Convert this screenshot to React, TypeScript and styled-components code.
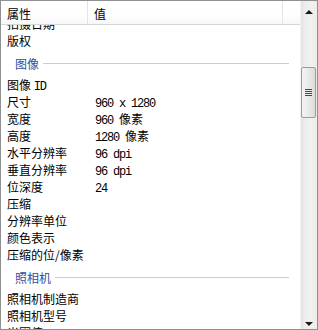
import React from "react";
import styled, { createGlobalStyle } from "styled-components";

const Global = createGlobalStyle`
  html, body { margin: 0; padding: 0; background: #ffffff; overflow: hidden; }
  * { box-sizing: border-box; }
`;

const Frame = styled.div`
  width: 318px;
  height: 330px;
  border: 1px solid #8f9090;
  display: flex;
  background: #ffffff;
  font-family: "Noto Sans CJK SC", "Noto Sans", sans-serif;
  font-size: 12px;
  color: #000000;
`;

const Main = styled.div`
  flex: 1;
  display: flex;
  flex-direction: column;
  min-width: 0;
`;

const Header = styled.div`
  height: 24px;
  flex: none;
  display: flex;
  border-bottom: 1px solid #d5d5d5;
  background: linear-gradient(#ffffff 0%, #ffffff 55%, #f6f7f9 100%);
`;

const HeaderCell = styled.div<{ $w?: number; $pad?: number }>`
  ${(p) => (p.$w ? `width: ${p.$w}px; flex: none;` : "flex: 1;")}
  padding-left: ${(p) => p.$pad ?? 0}px;
  border-right: ${(p) => (p.$w ? "1px solid #e3e5e9" : "none")};
  display: flex;
  align-items: center;
  line-height: 23px;
  padding-top: 2px;
`;

const Viewport = styled.div`
  flex: 1;
  overflow: hidden;
`;

const List = styled.div`
  margin-top: -10px;
  display: flex;
  flex-direction: column;
`;

const Row = styled.div`
  height: 17px;
  display: grid;
  grid-template-columns: 88px 1fr;
  padding-left: 6px;
  line-height: 17px;
  white-space: nowrap;
`;

const Num = styled.span`
  font-family: "Liberation Mono", "DejaVu Sans Mono", monospace;
  font-size: 12px;
  letter-spacing: -1.2px;
`;

const Group = styled.div`
  height: 27px;
  display: flex;
  align-items: center;
  padding-left: 14px;
  padding-right: 11px;
  padding-top: 1px;
  gap: 4px;
  color: #2f4f9f;
`;

const GroupLine = styled.div`
  flex: 1;
  height: 1px;
  background: #c3cddd;
  margin-top: 1px;
`;

const Scrollbar = styled.div`
  width: 17px;
  flex: none;
  display: flex;
  flex-direction: column;
  background: linear-gradient(90deg, #e3e3e3 0%, #ececec 20%, #f1f1f1 60%, #ececec 100%);
  border-left: 1px solid #f4f4f4;
`;

const ArrowButton = styled.div<{ $h: number; $down?: boolean }>`
  height: ${(p) => p.$h}px;
  flex: none;
  display: flex;
  justify-content: center;
  align-items: ${(p) => (p.$down ? "flex-end" : "center")};
  padding-bottom: ${(p) => (p.$down ? 3 : 0)}px;
  padding-top: ${(p) => (p.$down ? 0 : 2)}px;
`;

const Tri = styled.div<{ $down?: boolean }>`
  width: 0;
  height: 0;
  border-left: 4px solid transparent;
  border-right: 4px solid transparent;
  ${(p) =>
    p.$down
      ? "border-top: 4px solid #1a1a1a;"
      : "border-bottom: 4px solid #1a1a1a;"}
`;

const Track = styled.div<{ $h?: number }>`
  ${(p) => (p.$h !== undefined ? `height: ${p.$h}px; flex: none;` : "flex: 1;")}
`;

const Thumb = styled.div`
  height: 51px;
  flex: none;
  margin: 0 1px 0 0;
  border: 1px solid #9b9b9b;
  border-radius: 2px;
  background: linear-gradient(90deg, #f3f3f3 0%, #ececec 40%, #dcdcdc 100%);
  display: flex;
  flex-direction: column;
  align-items: center;
  justify-content: center;
  gap: 1px;
`;

const Grip = styled.div`
  width: 7px;
  height: 1px;
  background: #4a4a4a;
`;

type Item =
  | { kind: "row"; label: React.ReactNode; value?: React.ReactNode }
  | { kind: "group"; title: string };

const items: Item[] = [
  { kind: "row", label: "拍摄日期" },
  { kind: "row", label: "版权" },
  { kind: "group", title: "图像" },
  { kind: "row", label: <>图像 <Num>ID</Num></> },
  { kind: "row", label: "尺寸", value: <Num>960 x 1280</Num> },
  { kind: "row", label: "宽度", value: <><Num>960 </Num>像素</> },
  { kind: "row", label: "高度", value: <><Num>1280 </Num>像素</> },
  { kind: "row", label: "水平分辨率", value: <Num>96 dpi</Num> },
  { kind: "row", label: "垂直分辨率", value: <Num>96 dpi</Num> },
  { kind: "row", label: "位深度", value: <Num>24</Num> },
  { kind: "row", label: "压缩" },
  { kind: "row", label: "分辨率单位" },
  { kind: "row", label: "颜色表示" },
  { kind: "row", label: "压缩的位/像素" },
  { kind: "group", title: "照相机" },
  { kind: "row", label: "照相机制造商" },
  { kind: "row", label: "照相机型号" },
  { kind: "row", label: "光圈值" },
];

export default function App() {
  return (
    <>
      <Global />
      <Frame>
        <Main>
          <Header>
            <HeaderCell $w={87} $pad={6}>属性</HeaderCell>
            <HeaderCell $w={195} $pad={6}>值</HeaderCell>
            <HeaderCell />
          </Header>
          <Viewport>
            <List>
              {items.map((it, i) =>
                it.kind === "group" ? (
                  <Group key={i}>
                    <span>{it.title}</span>
                    <GroupLine />
                  </Group>
                ) : (
                  <Row key={i}>
                    <span>{it.label}</span>
                    <span>{it.value}</span>
                  </Row>
                )
              )}
            </List>
          </Viewport>
        </Main>
        <Scrollbar>
          <ArrowButton $h={20}>
            <Tri />
          </ArrowButton>
          <Track $h={46} />
          <Thumb>
            <Grip />
            <Grip />
            <Grip />
            <Grip />
          </Thumb>
          <Track />
          <ArrowButton $h={12} $down>
            <Tri $down />
          </ArrowButton>
        </Scrollbar>
      </Frame>
    </>
  );
}
